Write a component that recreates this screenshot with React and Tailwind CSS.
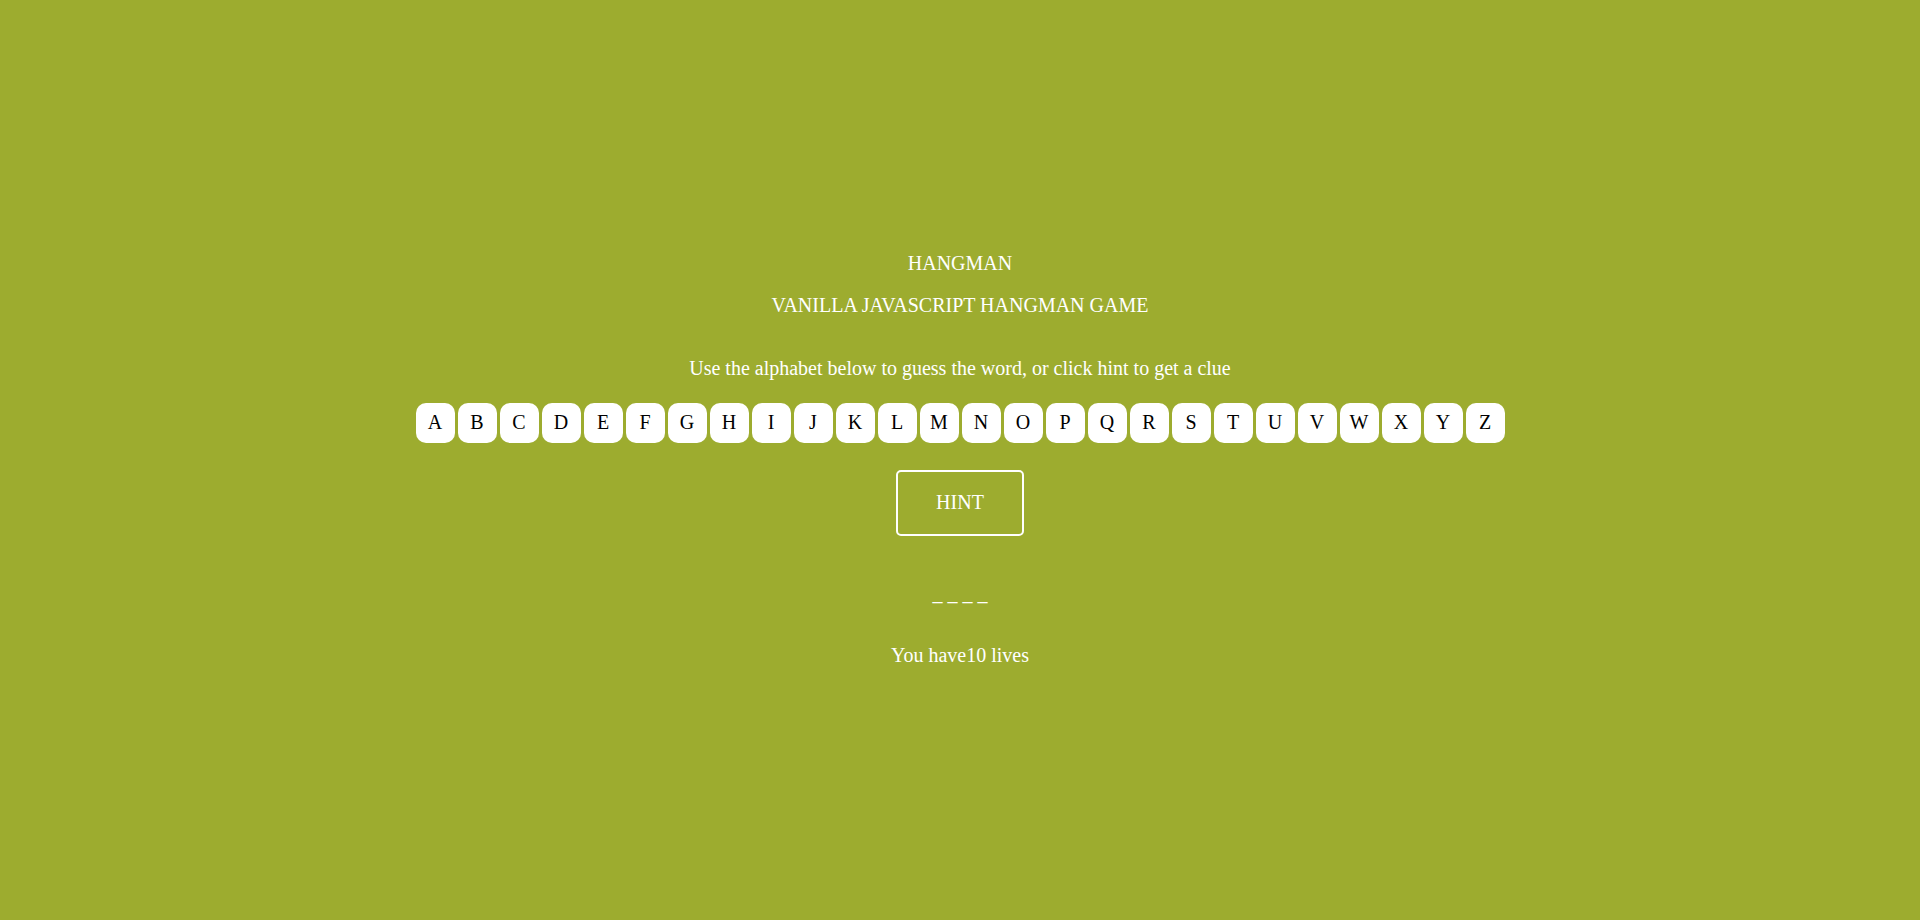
import React from 'react';

const letters = 'ABCDEFGHIJKLMNOPQRSTUVWXYZ'.split('');

export default function App() {
  return (
    <div className="h-screen w-full flex flex-col items-center justify-center pb-[2px] bg-[#9dac2f] text-white text-[20px] leading-[23px] font-['Liberation_Serif','Times_New_Roman',serif]">
      {/* Heading */}
      <h1 className="h-[23px]">HANGMAN</h1>
      <h2 className="mt-[19px] h-[23px]">VANILLA JAVASCRIPT HANGMAN GAME</h2>
      <p className="mt-[40px] h-[23px]">Use the alphabet below to guess the word, or click hint to get a clue</p>

      {/* Alphabet */}
      <div className="mt-[23px] flex gap-[3px]">
        {letters.map((l) => (
          <button
            key={l}
            className="w-[39px] h-[40px] rounded-[10px] bg-white text-black flex items-center justify-center"
          >
            {l}
          </button>
        ))}
      </div>

      {/* Hint */}
      <button className="mt-[27px] w-[128px] h-[66px] border-2 border-white rounded-[5px] text-white">
        HINT
      </button>

      {/* Word */}
      <p className="mt-[46px] h-[23px] whitespace-pre">_ _ _ _</p>
      <p className="mt-[39px] h-[23px]">You have10 lives</p>
    </div>
  );
}
